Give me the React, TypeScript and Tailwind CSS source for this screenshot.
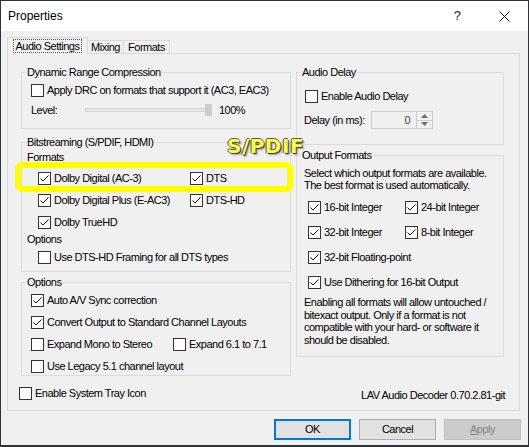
import React from 'react';

function Check({ checked }: { checked?: boolean }) {
  return (
    <span className="w-[13px] h-[13px] shrink-0 border border-[#333333] bg-white flex items-center justify-center">
      {checked && (
        <svg width="11" height="11" viewBox="0 0 11 11">
          <path d="M1.5 5.5 L4 8 L9.5 2.5" fill="none" stroke="#111" strokeWidth="1" />
        </svg>
      )}
    </span>
  );
}

function Opt({ label, checked, className = '' }: { label: string; checked?: boolean; className?: string }) {
  return (
    <div className={`flex items-center whitespace-nowrap ${className}`}>
      <Check checked={checked} />
      <span className="ml-[3px]">{label}</span>
    </div>
  );
}

function Group({ title, className = '', children }: { title: string; className?: string; children?: React.ReactNode }) {
  return (
    <div className={`relative border border-[#dcdcdc] ${className}`}>
      <span className="absolute left-[4px] -top-[7px] bg-[#f0f0f0] px-[1px] leading-[13px] whitespace-nowrap">{title}</span>
      {children}
    </div>
  );
}

export default function App() {
  return (
    <div className="relative w-[529px] h-[447px] bg-[#2d3439] pt-[1px] px-[1px] pb-[2px] font-['Liberation_Sans',Arial,sans-serif] text-[11px] tracking-[-0.5px] text-black">
      <div className="h-full bg-[#f0f0f0] flex flex-col">
        {/* title bar */}
        <div className="h-[30px] bg-white flex items-center pl-[7px] pr-[18px] shrink-0">
          <span className="text-[12px] tracking-normal">Properties</span>
          <span className="ml-auto text-[13px] tracking-normal text-[#222]">?</span>
          <svg className="ml-[38px]" width="11" height="11" viewBox="0 0 11 11">
            <path d="M0.5 0.5 L10.5 10.5 M10.5 0.5 L0.5 10.5" stroke="#111" strokeWidth="1" />
          </svg>
        </div>

        {/* tabs */}
        <div className="mt-[6px] pl-[6px] flex items-end h-[16px]">
          <div className="relative z-10 -mb-[1px] h-[17px] w-[81px] bg-[#f0f0f0] border border-b-0 border-[#d9d9d9] flex items-center justify-center">
            <span className="border border-dotted border-[#555] px-[2px] leading-[12px]">Audio Settings</span>
          </div>
          <div className="h-[13px] w-[36px] border border-b-0 border-l-0 border-[#d9d9d9] flex items-center justify-center">Mixing</div>
          <div className="h-[13px] w-[46px] border border-b-0 border-l-0 border-[#d9d9d9] flex items-center justify-center">Formats</div>
        </div>

        {/* tab page */}
        <div className="ml-[6px] w-[513px] h-[358px] border border-[#d9d9d9] bg-[#f0f0f0] flex pl-[13px] pt-[18px]">
          {/* left column */}
          <div className="w-[270px] flex flex-col">
            <Group title="Dynamic Range Compression" className="h-[57px]">
              <Opt className="mt-[6px] h-[22px] pl-[9px]" label="Apply DRC on formats that support it (AC3, EAC3)" />
              <div className="h-[18px] pl-[9px] flex items-center">
                <span className="w-[54px]">Level:</span>
                <div className="relative w-[126px] h-[4px] bg-[#e7e7e7] border border-[#d6d6d6]">
                  <span className="absolute left-[119px] -top-[5px] w-[7px] h-[12px] bg-[#cdcdcd]" />
                </div>
                <span className="ml-[8px]">100%</span>
              </div>
            </Group>

            <Group title="Bitstreaming (S/PDIF, HDMI)" className="mt-[13px] h-[130px]">
              <div className="mt-[7px] h-[14px] leading-[14px] pl-[5px]">Formats</div>
              <div className="mt-[3px] pl-[16px] grid grid-cols-[152px_1fr]">
                <Opt className="h-[22px]" checked label="Dolby Digital (AC-3)" />
                <Opt className="h-[22px]" checked label="DTS" />
                <Opt className="h-[22px]" checked label="Dolby Digital Plus (E-AC3)" />
                <Opt className="h-[22px]" checked label="DTS-HD" />
                <Opt className="h-[22px]" checked label="Dolby TrueHD" />
              </div>
              <div className="h-[13px] leading-[13px] pl-[5px]">Options</div>
              <Opt className="h-[22px] pl-[16px]" label="Use DTS-HD Framing for all DTS types" />
            </Group>

            <Group title="Options" className="mt-[10px] h-[94px]">
              <div className="pt-[6px] pl-[9px] grid grid-cols-[142px_1fr]">
                <Opt className="h-[22px] col-span-2" checked label="Auto A/V Sync correction" />
                <Opt className="h-[22px] col-span-2" checked label="Convert Output to Standard Channel Layouts" />
                <Opt className="h-[22px]" label="Expand Mono to Stereo" />
                <Opt className="h-[22px]" label="Expand 6.1 to 7.1" />
                <Opt className="h-[22px] col-span-2" label="Use Legacy 5.1 channel layout" />
              </div>
            </Group>

            <Opt className="mt-[6px] h-[22px] -ml-[2px]" label="Enable System Tray Icon" />
          </div>

          {/* right column */}
          <div className="ml-[5px] w-[208px] flex flex-col">
            <Group title="Audio Delay" className="h-[73px]">
              <Opt className="mt-[12px] h-[22px] pl-[8px]" label="Enable Audio Delay" />
              <div className="mt-[4px] h-[18px] pl-[7px] flex items-center">
                <span className="w-[67px]">Delay (in ms):</span>
                <div className="w-[46px] h-[18px] border border-[#cccccc] bg-[#f0f0f0] flex items-center justify-end pr-[6px] text-[#444]">0</div>
                <div className="w-[16px] h-[18px] border border-l-0 border-[#cccccc] bg-[#f0f0f0] flex flex-col">
                  <div className="flex-1 flex items-center justify-center border-b border-[#cccccc]">
                    <svg width="7" height="4" viewBox="0 0 7 4"><path d="M0 4 L3.5 0 L7 4 Z" fill="#6d6d6d" /></svg>
                  </div>
                  <div className="flex-1 flex items-center justify-center">
                    <svg width="7" height="4" viewBox="0 0 7 4"><path d="M0 0 L3.5 4 L7 0 Z" fill="#6d6d6d" /></svg>
                  </div>
                </div>
              </div>
            </Group>

            <Group title="Output Formats" className="mt-[10px] h-[202px]">
              <div className="pt-[11px] pl-[7px] leading-[12px] whitespace-nowrap">
                Select which output formats are available.
                <br />
                The best format is used automatically.
              </div>
              <div className="mt-[4px] pl-[11px] grid grid-cols-[97px_1fr]">
                <Opt className="h-[25px]" checked label="16-bit Integer" />
                <Opt className="h-[25px]" checked label="24-bit Integer" />
                <Opt className="h-[25px]" checked label="32-bit Integer" />
                <Opt className="h-[25px]" checked label="8-bit Integer" />
                <Opt className="h-[25px] col-span-2" checked label="32-bit Floating-point" />
                <Opt className="h-[25px] col-span-2" checked label="Use Dithering for 16-bit Output" />
              </div>
              <div className="mt-[1px] pl-[7px] leading-[12.5px] whitespace-nowrap">
                Enabling all formats will allow untouched /
                <br />
                bitexact output. Only if a format is not
                <br />
                compatible with your hard- or software it
                <br />
                should be disabled.
              </div>
            </Group>

            <div className="mt-[30px] h-[16px] leading-[16px] text-right -mr-[1px] whitespace-nowrap">LAV Audio Decoder 0.70.2.81-git</div>
          </div>
        </div>

        {/* buttons */}
        <div className="mt-[8px] pr-[7px] flex justify-end gap-[8px]">
          <button className="w-[77px] h-[21px] border-2 border-[#0078d7] bg-[#e1e1e1] flex items-center justify-center">OK</button>
          <button className="w-[77px] h-[21px] border border-[#adadad] bg-[#e1e1e1] flex items-center justify-center">Cancel</button>
          <button className="w-[77px] h-[21px] border border-[#bfbfbf] bg-[#cccccc] text-[#838383] flex items-center justify-center">
            <span><span className="underline">A</span>pply</span>
          </button>
        </div>
      </div>

      {/* annotation overlay */}
      <div className="absolute left-[15px] top-[162px] w-[278px] h-[30px] border-[6px] border-[#ffff00] rounded-[7px] blur-[0.7px]" />
      <span className="absolute left-[227px] top-[131px] font-['DejaVu_Sans',sans-serif] font-bold text-[20px] tracking-[0.5px] text-[#ffff3a] [text-shadow:1px_1px_0_#3a3a5a,-1px_0_0_#55556a,0_-1px_0_#55556a,2px_2px_2px_rgba(0,0,0,0.35)]">S/PDIF</span>
    </div>
  );
}
